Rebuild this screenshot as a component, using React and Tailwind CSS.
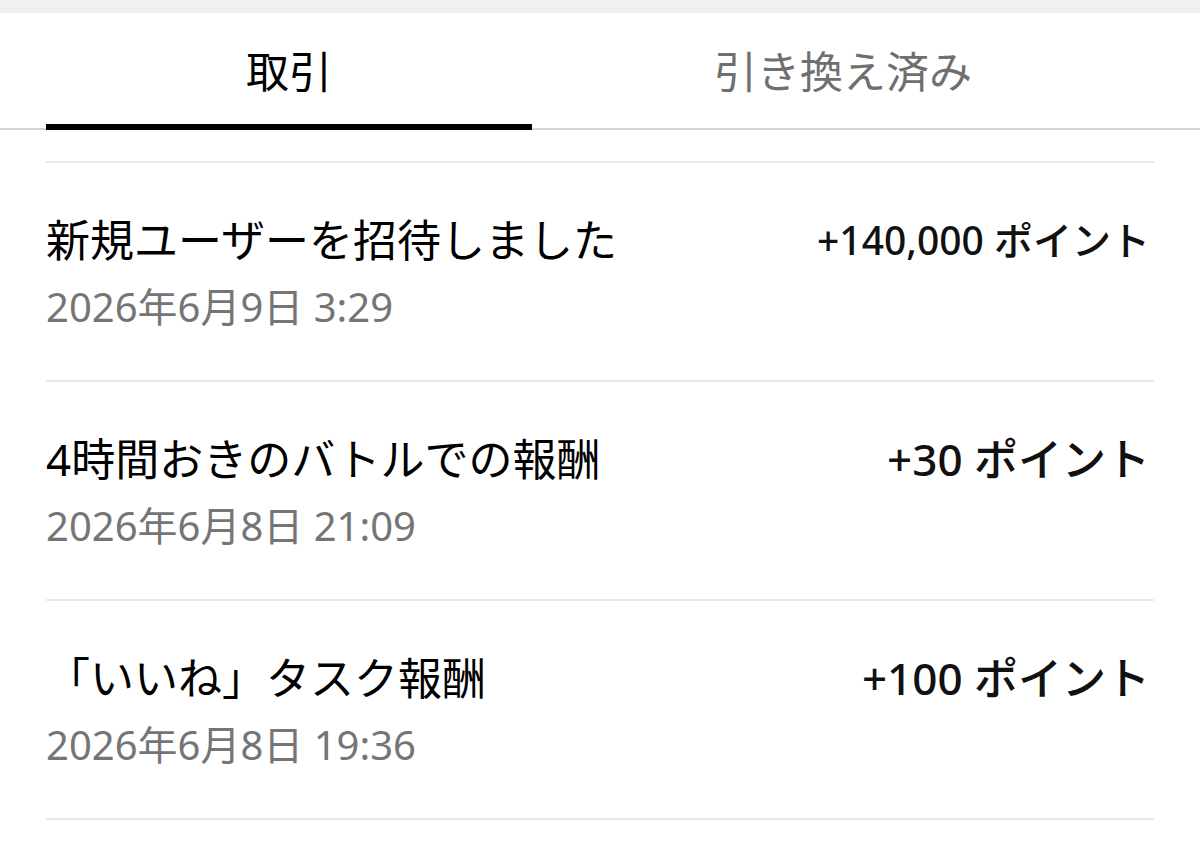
const rows = [
  { title: "新規ユーザーを招待しました", date: "2026年6月9日 3:29", amount: "+140,000 ポイント", size: "text-[39px]" },
  { title: "4時間おきのバトルでの報酬", date: "2026年6月8日 21:09", amount: "+30 ポイント", size: "text-[44px]" },
  { title: "「いいね」タスク報酬", date: "2026年6月8日 19:36", amount: "+100 ポイント", size: "text-[44px]" },
];

export default function App() {
  return (
    <div
      className="min-h-[847px] bg-white"
      style={{ fontFamily: '"Noto Sans", "Noto Sans CJK JP", sans-serif' }}
    >
      <div className="h-[13px] bg-[#f0f0f0]" />

      {/* Tabs */}
      <div className="border-b-[2px] border-[#d4d4d4]">
        <div className="flex px-[46px]">
          <div className="w-[486px] flex flex-col items-center">
            <div className="h-[111px] pt-[8px] flex items-center text-[43px] text-black">取引</div>
            <div className="h-[6px] w-full bg-black -mb-[2px] relative" />
          </div>
          <div className="flex-1 flex flex-col items-center">
            <div className="h-[111px] pt-[8px] flex items-center text-[43px] text-[#6f6f6f]">引き換え済み</div>
          </div>
        </div>
      </div>

      {/* List */}
      <div className="px-[46px] pt-[31px]">
        <div className="border-t-[2px] border-[#e8e8e8]">
          {rows.map((r) => (
            <div key={r.date} className="border-b-[2px] border-[#e8e8e8] pt-[49px] pb-[51px]">
              <div className="flex items-center justify-between">
                <div className="text-[44px] leading-[56px] text-black">{r.title}</div>
                <div className={`${r.size} leading-[56px] font-medium text-[#111] pr-[4px]`}>{r.amount}</div>
              </div>
              <div className="mt-[17px] text-[40px] leading-[44px] text-[#757575]">
                {r.date}
              </div>
            </div>
          ))}
        </div>
      </div>
    </div>
  );
}
